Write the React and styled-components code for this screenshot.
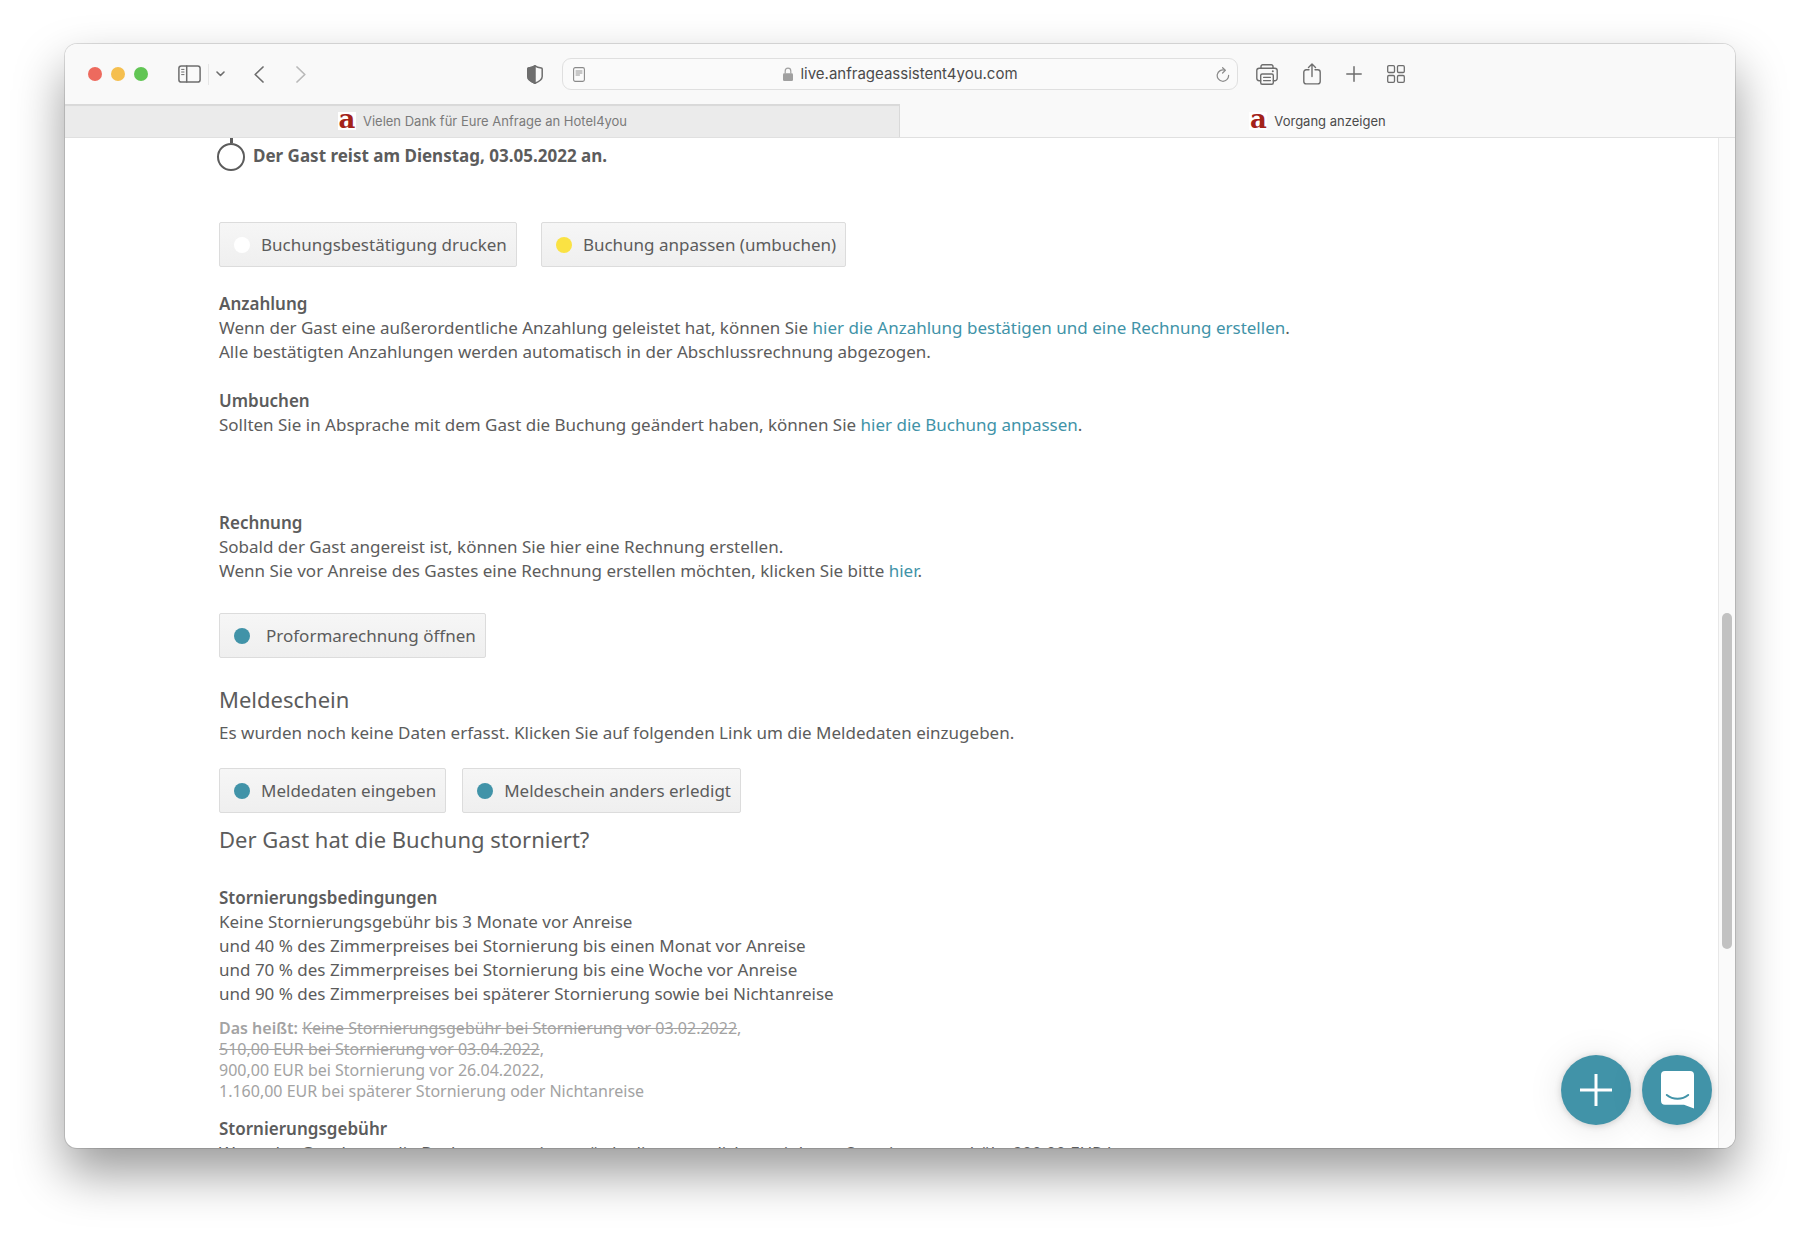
import React from "react";
import styled, { createGlobalStyle } from "styled-components";

const teal = "#4193a8";
const ink = "#5c5c5c";
const icon = "#6e6e6e";
const bodyFont = '"Noto Sans", "Open Sans", sans-serif';
const chromeFont = 'Inter, "Liberation Sans", sans-serif';

const GlobalStyle = createGlobalStyle`
  *, *::before, *::after { box-sizing: border-box; }
  body { margin: 0; background: #fff; }
  button, input { font: inherit; color: inherit; }
  h2, h3, p { margin: 0; }
`;

const Desktop = styled.div`
  height: 100vh;
  padding: 44px 65px 86px;
  display: flex;
`;

const Window = styled.div`
  flex: 1;
  min-width: 0;
  display: flex;
  flex-direction: column;
  overflow: hidden;
  border-radius: 12px;
  background: #fff;
  box-shadow: 0 0 0 1px rgba(0, 0, 0, 0.12), 0 25px 50px rgba(0, 0, 0, 0.4);
`;

const Toolbar = styled.header`
  display: grid;
  grid-template-columns: 1fr minmax(0, 676px) 1fr;
  align-items: center;
  height: 60px;
  flex: none;
  background: #f9f9f9;
`;

const ToolsLeft = styled.div`
  display: flex;
  align-items: center;
  padding: 0 19px 0 23px;
`;

const ToolsRight = styled.div`
  display: flex;
  align-items: center;
  gap: 25px;
  padding-left: 18px;
`;

const Lights = styled.div`
  display: flex;
  gap: 9px;
  margin-right: 30px;
`;

const Light = styled.button`
  width: 14px;
  height: 14px;
  padding: 0;
  border: 0;
  border-radius: 50%;
  background: ${(p) => p.$color};
`;

const IconButton = styled.button`
  display: flex;
  padding: 0;
  border: 0;
  background: none;
  color: ${(p) => (p.$dim ? "#b9b9b9" : icon)};
  margin-left: ${(p) => p.$before || "0"};
  svg { display: block; }
`;

const Divider = styled.span`
  width: 1px;
  height: 21px;
  margin: 0 7px;
  background: #e6e6e6;
`;

const AddressBar = styled.div`
  display: flex;
  align-items: center;
  height: 32px;
  padding: 0 7px 0 10px;
  border: 1px solid #dfdfdf;
  border-radius: 9px;
  background: #fafafa;
`;

const Address = styled.label`
  flex: 1;
  display: flex;
  align-items: center;
  justify-content: center;
  gap: 7px;
  color: #a0a0a0;
  svg { flex: none; }
`;

const AddressInput = styled.input`
  field-sizing: content;
  border: 0;
  padding: 0;
  background: none;
  color: #4b4b4b;
  font: 15px/20px ${chromeFont};
`;

const Tabs = styled.nav`
  display: grid;
  grid-template-columns: 1fr 1fr;
  height: 34px;
  flex: none;
  border-bottom: 1px solid #e0e0e0;
`;

const Tab = styled.button`
  display: flex;
  align-items: center;
  justify-content: center;
  gap: 7px;
  padding: 0;
  border: 0;
  font: 13px/16px ${chromeFont};
  color: ${(p) => (p.$active ? "#4b4b4b" : "#7a7a7a")};
  background: ${(p) => (p.$active ? "#f9f9f9" : "#ebebeb")};
  box-shadow: ${(p) => (p.$active ? "none" : "inset 0 2px 1px #d9d9d9, inset -1px 0 0 #d9d9d9")};
`;

const Favicon = styled.span`
  display: flex;
  align-items: flex-end;
  justify-content: center;
  width: 18px;
  height: 18px;
  background: #fff;
  color: #a3221a;
  font: bold 26px/22px "DejaVu Serif", serif;
`;

const Viewport = styled.div`
  position: relative;
  flex: 1;
  min-height: 0;
  display: flex;
`;

const Page = styled.main`
  flex: 1;
  min-width: 0;
  overflow: hidden;
  padding: 0 154px;
  color: ${ink};
  font: 17px/24px ${bodyFont};
`;

const TimelineEntry = styled.p`
  display: flex;
  align-items: flex-start;
  gap: 8px;
  margin-left: -2px;
  font-weight: 700;
  line-height: 36px;
`;

const Marker = styled.span`
  display: flex;
  flex-direction: column;
  align-items: center;
  &::before {
    content: "";
    width: 3px;
    height: 5px;
    background: ${ink};
  }
  &::after {
    content: "";
    width: 28px;
    height: 28px;
    border: 2px solid ${ink};
    border-radius: 50%;
  }
`;

const Actions = styled.div`
  display: flex;
  gap: ${(p) => p.$gap || "16px"};
  margin-top: ${(p) => p.$top};
`;

const ActionButton = styled.button`
  display: flex;
  align-items: center;
  gap: ${(p) => (p.$wide ? "16px" : "11px")};
  height: 45px;
  padding: 0 9px 0 14px;
  border: 1px solid #dcdcdc;
  border-radius: 2px;
  background: linear-gradient(#f6f6f6, #efefef);
  white-space: nowrap;
`;

const Dot = styled.span`
  width: 16px;
  height: 16px;
  border-radius: 50%;
  background: ${(p) => p.$color};
`;

const Section = styled.section`
  margin-top: ${(p) => p.$top};
`;

const Label = styled.h3`
  font-size: 17px;
  line-height: 24px;
  font-weight: 600;
`;

const Title = styled.h2`
  font: 22px/32px ${bodyFont};
`;

const Intro = styled.p`
  margin-top: 6px;
`;

const Link = styled.a`
  color: ${teal};
  text-decoration: none;
`;

const Fine = styled.p`
  margin-top: 12px;
  color: #a3a3a3;
  font-size: 16px;
  line-height: 21px;
  b { font-weight: 600; }
`;

const ScrollTrack = styled.div`
  width: 17px;
  flex: none;
  display: grid;
  grid-template-rows: 475fr 336fr 199fr;
  padding: 0 3px;
  border-left: 1px solid #e8e8e8;
  background: #fafafa;
`;

const ScrollThumb = styled.div`
  grid-row: 2;
  width: 10px;
  border-radius: 5px;
  background: #c2c2c2;
`;

const FloatingActions = styled.div`
  position: absolute;
  right: 23px;
  bottom: 23px;
  display: flex;
  gap: 11px;
`;

const RoundButton = styled.button`
  display: flex;
  align-items: center;
  justify-content: center;
  width: 70px;
  height: 70px;
  padding: 0;
  border: 0;
  border-radius: 50%;
  background: ${teal};
  box-shadow: 0 1px 7px rgba(0, 0, 0, 0.16), 0 2px 36px rgba(0, 0, 0, 0.1);
`;

const stroke = { fill: "none", stroke: "currentColor", strokeLinecap: "round", strokeLinejoin: "round" };

const SidebarIcon = () => (
  <svg width="23" height="18" viewBox="0 0 23 18" {...stroke} strokeWidth="1.5">
    <rect x="0.9" y="0.9" width="21.2" height="16.2" rx="2.4" />
    <path d="M8.7 1v16" />
    <path d="M3.6 4.4h2.4M3.6 7h2.4M3.6 9.6h2.4" strokeWidth="1" />
  </svg>
);

const Chevron = ({ w, h, d, sw }) => (
  <svg width={w} height={h} viewBox={`0 0 ${w} ${h}`} {...stroke} strokeWidth={sw}>
    <path d={d} />
  </svg>
);

const ShieldIcon = () => (
  <svg width="16" height="19" viewBox="0 0 16 19" {...stroke} strokeWidth="1.5">
    <path d="M8 .8c1.5 1.2 4 2 6.300 2.200.6.1.9.4.9 1v7.400c0 3-3.700 5.300-7.200 6.800C4.500 16.700.8 14.400.8 11.400V4c0-.6.3-.9.9-1C4 2.800 6.500 2 8 .8z" />
    <path d="M8 .8v17.400C4.500 16.700.8 14.400.8 11.400V4c0-.6.3-.9.9-1C4 2.800 6.500 2 8 .8z" fill="currentColor" />
  </svg>
);

const ReaderIcon = () => (
  <svg width="12" height="15" viewBox="0 0 12 15" {...stroke} stroke="#8a8a8a" strokeWidth="1.1">
    <rect x="0.6" y="0.6" width="10.8" height="13.8" rx="1.6" />
    <path d="M3 4h6M3 6h6M3 8h3.5" strokeWidth="0.9" />
  </svg>
);

const LockIcon = () => (
  <svg width="10" height="14" viewBox="0 0 10 14">
    <rect x="0" y="6.2" width="10" height="7.8" rx="1.3" fill="currentColor" />
    <path d="M2.2 6.500V4a2.800 2.900 0 0 1 5.600 0v2.500" fill="none" stroke="currentColor" strokeWidth="1.2" />
  </svg>
);

const ReloadIcon = () => (
  <svg width="14" height="15" viewBox="0 0 14 15" {...stroke} stroke="#8a8a8a" strokeWidth="1.2">
    <path d="M12.600 8.300A5.700 5.700 0 1 1 8.800 3.200" />
    <path d="M6.600.7l2.700 2.600-2.700 2.700" />
  </svg>
);

const PrinterIcon = () => (
  <svg width="22" height="21" viewBox="0 0 22 21" {...stroke} strokeWidth="1.4">
    <path d="M4.700 16.700H3.200a2.400 2.400 0 0 1-2.400-2.400V6.600a2.400 2.400 0 0 1 2.400-2.400h15.600a2.400 2.400 0 0 1 2.400 2.400v7.700a2.400 2.400 0 0 1-2.400 2.400h-1.500" />
    <path d="M5 4V2.500A1.700 1.700 0 0 1 6.700.8h8.600A1.700 1.700 0 0 1 17 2.500V4" />
    <rect x="4.7" y="10" width="12.6" height="10.2" rx="1.5" />
    <path d="M7.500 13.300h7M7.500 16.600h7" strokeWidth="1.2" />
    <circle cx="16.8" cy="7.2" r="1" fill="currentColor" stroke="none" />
  </svg>
);

const ShareIcon = () => (
  <svg width="18" height="22" viewBox="0 0 18 22" {...stroke} strokeWidth="1.4">
    <path d="M6 6.800H3.200A2.400 2.400 0 0 0 .8 9.200v9.300a2.400 2.400 0 0 0 2.400 2.400h11.600a2.400 2.400 0 0 0 2.400-2.400V9.200a2.400 2.400 0 0 0-2.400-2.400H12" />
    <path d="M9 13.500V1M5.500 4.400L9 .9l3.500 3.500" />
  </svg>
);

const PlusIcon = () => (
  <svg width="16" height="16" viewBox="0 0 16 16" {...stroke} strokeWidth="1.5">
    <path d="M8 .8v14.400M.8 8h14.400" />
  </svg>
);

const GridIcon = () => (
  <svg width="18" height="18" viewBox="0 0 18 18" {...stroke} strokeWidth="1.3">
    <rect x=".7" y=".7" width="6.8" height="6.8" rx="1.2" />
    <rect x="10.5" y=".7" width="6.8" height="6.8" rx="1.2" />
    <rect x=".7" y="10.5" width="6.8" height="6.8" rx="1.2" />
    <rect x="10.5" y="10.5" width="6.8" height="6.8" rx="1.2" />
  </svg>
);

const BigPlusIcon = () => (
  <svg width="32" height="32" viewBox="0 0 32 32" stroke="#fff" strokeWidth="3">
    <path d="M16 0v32M0 16h32" />
  </svg>
);

const ChatIcon = () => (
  <svg width="33" height="38" viewBox="0 0 33 38">
    <path d="M4 0h25a4 4 0 0 1 4 4v33.500L23 33.700H4a4 4 0 0 1-4-4V4a4 4 0 0 1 4-4z" fill="#fff" />
    <path d="M5.800 24c6.200 5 15.200 5 21.400 0" fill="none" stroke={teal} strokeWidth="2" strokeLinecap="round" />
  </svg>
);

function Action({ color, wide, children }) {
  return (
    <ActionButton type="button" $wide={wide}>
      <Dot $color={color} />
      {children}
    </ActionButton>
  );
}

export default function App() {
  return (
    <Desktop>
      <GlobalStyle />
      <Window>
        <Toolbar>
          <ToolsLeft>
            <Lights>
              <Light aria-label="Schließen" $color="#ed6a5e" />
              <Light aria-label="Minimieren" $color="#f5bf4f" />
              <Light aria-label="Maximieren" $color="#61c554" />
            </Lights>
            <IconButton aria-label="Seitenleiste"><SidebarIcon /></IconButton>
            <Divider />
            <IconButton aria-label="Tabgruppen">
              <Chevron w={9} h={6} sw={1.6} d="M1 1l3.5 3.5L8 1" />
            </IconButton>
            <IconButton aria-label="Zurück" $before="29px">
              <Chevron w={10} h={17} sw={1.7} d="M9 1L1.2 8.5 9 16" />
            </IconButton>
            <IconButton aria-label="Vorwärts" $before="32px" $dim>
              <Chevron w={10} h={17} sw={1.7} d="M1 1l7.8 7.5L1 16" />
            </IconButton>
            <IconButton aria-label="Datenschutz" $before="auto"><ShieldIcon /></IconButton>
          </ToolsLeft>
          <AddressBar>
            <IconButton aria-label="Reader"><ReaderIcon /></IconButton>
            <Address>
              <LockIcon />
              <AddressInput aria-label="Adresse" defaultValue="live.anfrageassistent4you.com" />
            </Address>
            <IconButton aria-label="Neu laden"><ReloadIcon /></IconButton>
          </AddressBar>
          <ToolsRight>
            <IconButton aria-label="Drucken"><PrinterIcon /></IconButton>
            <IconButton aria-label="Teilen"><ShareIcon /></IconButton>
            <IconButton aria-label="Neuer Tab"><PlusIcon /></IconButton>
            <IconButton aria-label="Tabübersicht"><GridIcon /></IconButton>
          </ToolsRight>
        </Toolbar>
        <Tabs>
          <Tab type="button"><Favicon>a</Favicon>Vielen Dank für Eure Anfrage an Hotel4you</Tab>
          <Tab type="button" $active><Favicon>a</Favicon>Vorgang anzeigen</Tab>
        </Tabs>
        <Viewport>
          <Page>
            <TimelineEntry><Marker />Der Gast reist am Dienstag, 03.05.2022 an.</TimelineEntry>
            <Actions $top="48px" $gap="24px">
              <Action color="#fff">Buchungsbestätigung drucken</Action>
              <Action color="#fae243">Buchung anpassen (umbuchen)</Action>
            </Actions>
            <Section $top="25px">
              <Label>Anzahlung</Label>
              <p>
                Wenn der Gast eine außerordentliche Anzahlung geleistet hat, können Sie{" "}
                <Link href="#anzahlung">hier die Anzahlung bestätigen und eine Rechnung erstellen</Link>.<br />
                Alle bestätigten Anzahlungen werden automatisch in der Abschlussrechnung abgezogen.
              </p>
            </Section>
            <Section $top="25px">
              <Label>Umbuchen</Label>
              <p>
                Sollten Sie in Absprache mit dem Gast die Buchung geändert haben, können Sie{" "}
                <Link href="#umbuchen">hier die Buchung anpassen</Link>.
              </p>
            </Section>
            <Section $top="74px">
              <Label>Rechnung</Label>
              <p>
                Sobald der Gast angereist ist, können Sie hier eine Rechnung erstellen.<br />
                Wenn Sie vor Anreise des Gastes eine Rechnung erstellen möchten, klicken Sie bitte{" "}
                <Link href="#rechnung">hier</Link>.
              </p>
              <Actions $top="30px">
                <Action color={teal} wide>Proformarechnung öffnen</Action>
              </Actions>
            </Section>
            <Section $top="25px">
              <Title>Meldeschein</Title>
              <Intro>Es wurden noch keine Daten erfasst. Klicken Sie auf folgenden Link um die Meldedaten einzugeben.</Intro>
              <Actions $top="23px">
                <Action color={teal}>Meldedaten eingeben</Action>
                <Action color={teal}>Meldeschein anders erledigt</Action>
              </Actions>
            </Section>
            <Section $top="10px">
              <Title>Der Gast hat die Buchung storniert?</Title>
            </Section>
            <Section $top="31px">
              <Label>Stornierungsbedingungen</Label>
              <p>
                Keine Stornierungsgebühr bis 3 Monate vor Anreise<br />
                und 40 % des Zimmerpreises bei Stornierung bis einen Monat vor Anreise<br />
                und 70 % des Zimmerpreises bei Stornierung bis eine Woche vor Anreise<br />
                und 90 % des Zimmerpreises bei späterer Stornierung sowie bei Nichtanreise
              </p>
              <Fine>
                <b>Das heißt:</b> <s>Keine Stornierungsgebühr bei Stornierung vor 03.02.2022</s>,<br />
                <s>510,00 EUR bei Stornierung vor 03.04.2022</s>,<br />
                900,00 EUR bei Stornierung vor 26.04.2022,<br />
                1.160,00 EUR bei späterer Stornierung oder Nichtanreise
              </Fine>
            </Section>
            <Section $top="15px">
              <Label>Stornierungsgebühr</Label>
              <p>
                Wenn der Gast heute die Buchung storniert, würde die vertraglich vereinbarte Stornierungsgebühr 900,00 EUR b.
              </p>
            </Section>
          </Page>
          <ScrollTrack><ScrollThumb /></ScrollTrack>
          <FloatingActions>
            <RoundButton aria-label="Hinzufügen"><BigPlusIcon /></RoundButton>
            <RoundButton aria-label="Chat öffnen"><ChatIcon /></RoundButton>
          </FloatingActions>
        </Viewport>
      </Window>
    </Desktop>
  );
}
